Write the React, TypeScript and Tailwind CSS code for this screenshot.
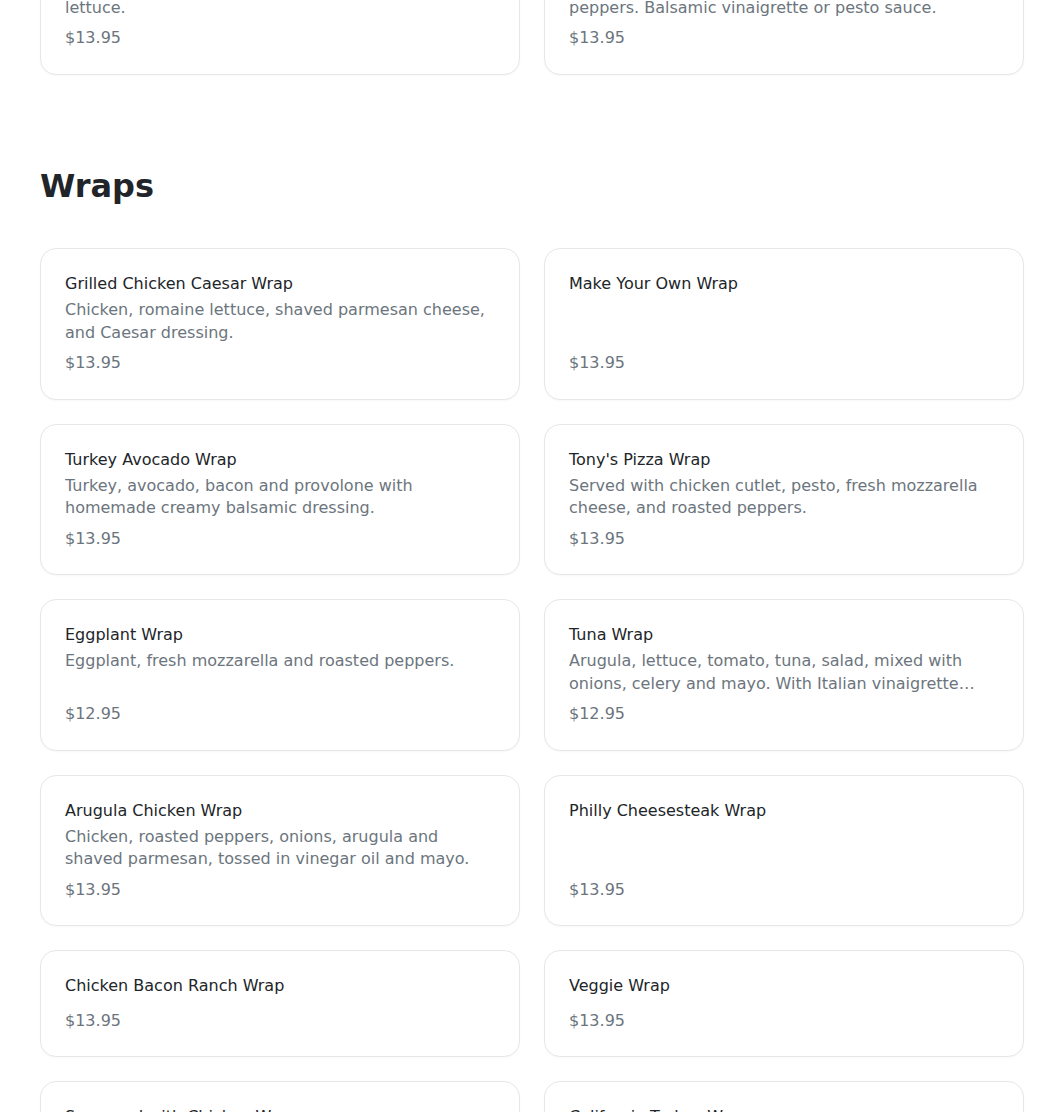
type Item = {
  name: string;
  description?: string;
  price: string;
};

const previousTail: Item[] = [
  {
    name: "Grilled Chicken Salad",
    description: "Grilled chicken, tomato, cucumber and romaine lettuce.",
    price: "$13.95",
  },
  {
    name: "Caprese Chicken Salad",
    description: "Grilled chicken, fresh mozzarella and roasted peppers. Balsamic vinaigrette or pesto sauce.",
    price: "$13.95",
  },
];

const wraps: Item[] = [
  {
    name: "Grilled Chicken Caesar Wrap",
    description: "Chicken, romaine lettuce, shaved parmesan cheese, and Caesar dressing.",
    price: "$13.95",
  },
  { name: "Make Your Own Wrap", price: "$13.95" },
  {
    name: "Turkey Avocado Wrap",
    description: "Turkey, avocado, bacon and provolone with homemade creamy balsamic dressing.",
    price: "$13.95",
  },
  {
    name: "Tony's Pizza Wrap",
    description: "Served with chicken cutlet, pesto, fresh mozzarella cheese, and roasted peppers.",
    price: "$13.95",
  },
  {
    name: "Eggplant Wrap",
    description: "Eggplant, fresh mozzarella and roasted peppers.",
    price: "$12.95",
  },
  {
    name: "Tuna Wrap",
    description:
      "Arugula, lettuce, tomato, tuna, salad, mixed with onions, celery and mayo. With Italian vinaigrette dressing.",
    price: "$12.95",
  },
  {
    name: "Arugula Chicken Wrap",
    description: "Chicken, roasted peppers, onions, arugula and shaved parmesan, tossed in vinegar oil and mayo.",
    price: "$13.95",
  },
  { name: "Philly Cheesesteak Wrap", price: "$13.95" },
  { name: "Chicken Bacon Ranch Wrap", price: "$13.95" },
  { name: "Veggie Wrap", price: "$13.95" },
  {
    name: "Seasoned with Chicken Wrap",
    description: "Seasoned chicken, lettuce, tomato, cheddar and chipotle mayo.",
    price: "$13.95",
  },
  {
    name: "California Turkey Wrap",
    description: "Turkey, avocado, sprouts, tomato and ranch dressing.",
    price: "$13.95",
  },
];

function MenuCard({ item }: { item: Item }) {
  return (
    <div className="flex flex-col rounded-2xl border border-[#e5e7eb] bg-white p-6 shadow-[0_1px_2px_rgba(0,0,0,0.03)]">
      <h3 className="mb-1 text-base leading-[1.4] text-[#212529]">{item.name}</h3>
      {item.description && (
        <p className="line-clamp-2 text-base leading-[1.4] text-[#6c757d]">{item.description}</p>
      )}
      <div className="mt-auto pt-2 text-base leading-[1.4] text-[#6c757d]">{item.price}</div>
    </div>
  );
}

export default function App() {
  return (
    <div className="h-[1112px] overflow-hidden bg-white font-['DejaVu_Sans',sans-serif]">
      <div className="pl-10 pr-5">
        {/* tail of the previous section, scrolled past */}
        <div className="-mt-[77px] grid grid-cols-2 gap-6">
          {previousTail.map((item) => (
            <MenuCard key={item.name} item={item} />
          ))}
        </div>

        <section className="mt-[92px]">
          <h2 className="mb-[43px] text-[32px] font-bold leading-[1.2] text-[#212529]">Wraps</h2>
          <div className="grid grid-cols-2 gap-6">
            {wraps.map((item) => (
              <MenuCard key={item.name} item={item} />
            ))}
          </div>
        </section>
      </div>
    </div>
  );
}
